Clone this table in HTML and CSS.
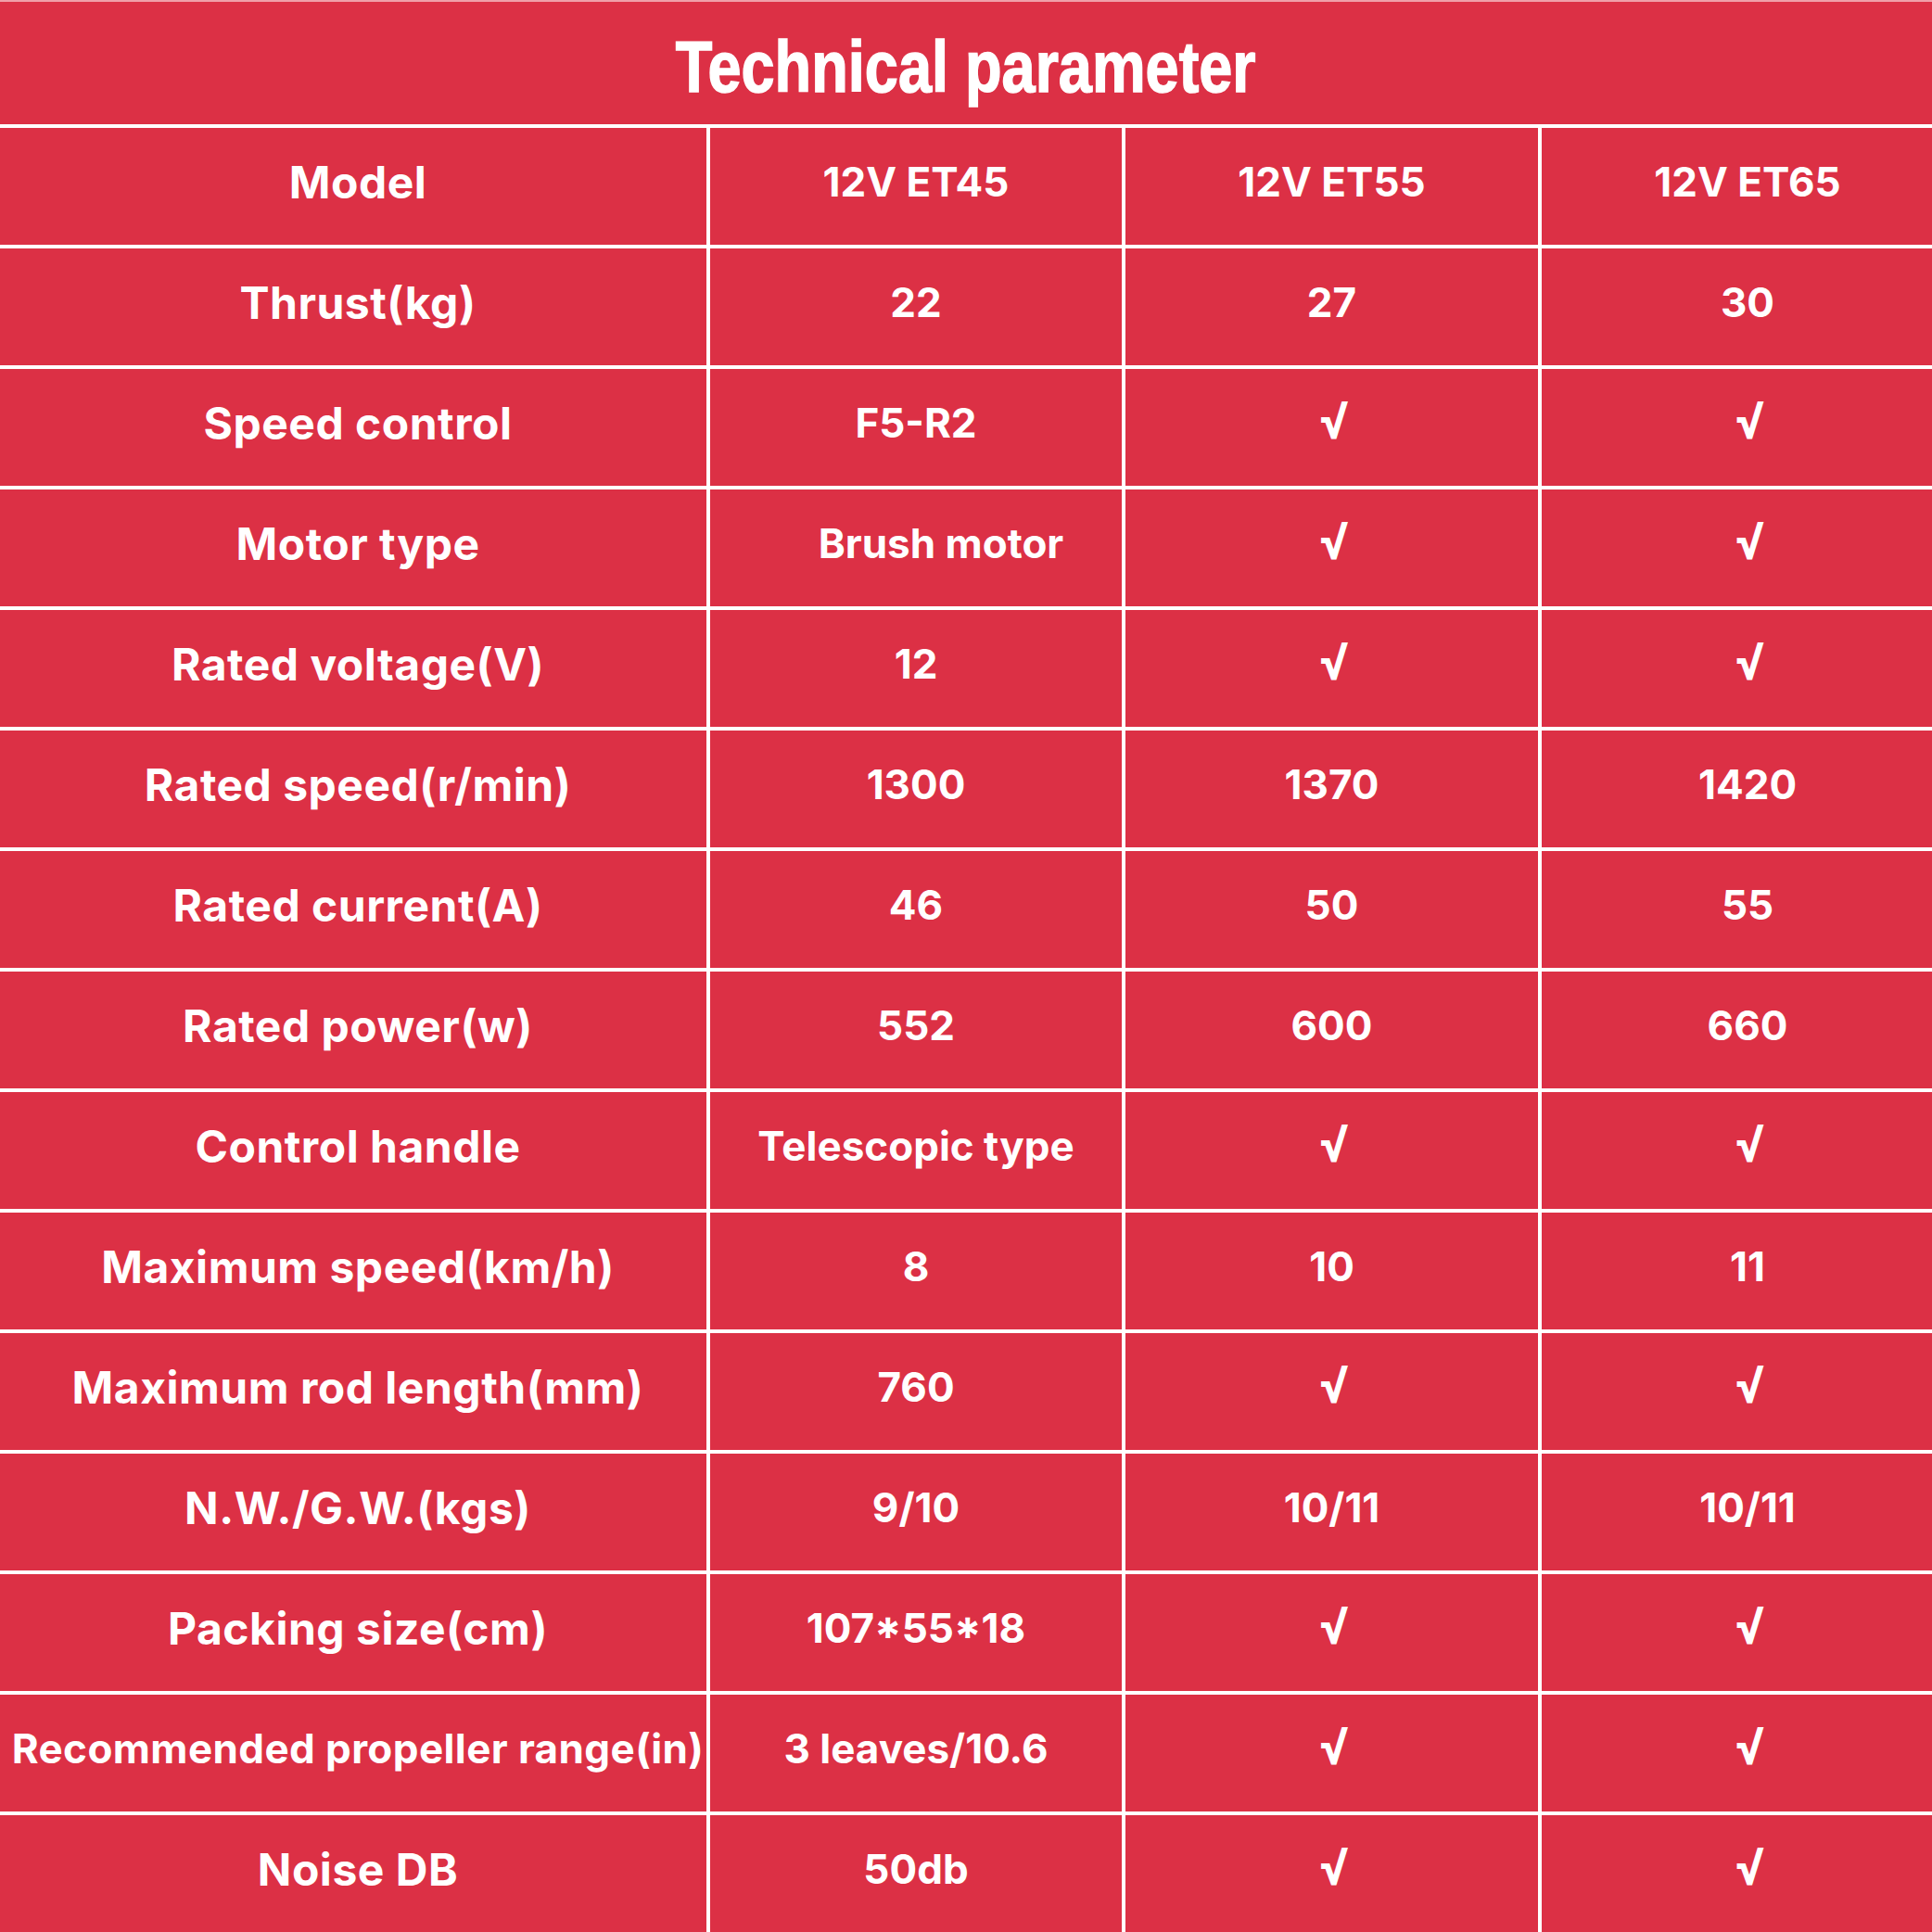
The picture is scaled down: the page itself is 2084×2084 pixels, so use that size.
FILE: index.html
```html
<!DOCTYPE html>
<html>
<head>
<meta charset="utf-8">
<link rel="stylesheet" href="styles.css">
</head>
<body>
<div class="sheet">
  <div class="title"><span class="title-text">Technical parameter</span></div>
  <div class="cell label">Model</div><div class="cell">12V ET45</div><div class="cell">12V ET55</div><div class="cell">12V ET65</div>
  <div class="cell label">Thrust(kg)</div><div class="cell">22</div><div class="cell">27</div><div class="cell">30</div>
  <div class="cell label">Speed control</div><div class="cell">F5-R2</div><div class="cell chk">√</div><div class="cell chk">√</div>
  <div class="cell label">Motor type</div><div class="cell shift">Brush motor</div><div class="cell chk">√</div><div class="cell chk">√</div>
  <div class="cell label">Rated voltage(V)</div><div class="cell">12</div><div class="cell chk">√</div><div class="cell chk">√</div>
  <div class="cell label">Rated speed(r/min)</div><div class="cell">1300</div><div class="cell">1370</div><div class="cell">1420</div>
  <div class="cell label">Rated current(A)</div><div class="cell">46</div><div class="cell">50</div><div class="cell">55</div>
  <div class="cell label">Rated power(w)</div><div class="cell">552</div><div class="cell">600</div><div class="cell">660</div>
  <div class="cell label">Control handle</div><div class="cell">Telescopic type</div><div class="cell chk">√</div><div class="cell chk">√</div>
  <div class="cell label">Maximum speed(km/h)</div><div class="cell">8</div><div class="cell">10</div><div class="cell">11</div>
  <div class="cell label">Maximum rod length(mm)</div><div class="cell">760</div><div class="cell chk">√</div><div class="cell chk">√</div>
  <div class="cell label">N.W./G.W.(kgs)</div><div class="cell">9/10</div><div class="cell">10/11</div><div class="cell">10/11</div>
  <div class="cell label">Packing size(cm)</div><div class="cell">107*55*18</div><div class="cell chk">√</div><div class="cell chk">√</div>
  <div class="cell label small">Recommended propeller range(in)</div><div class="cell">3 leaves/10.6</div><div class="cell chk">√</div><div class="cell chk">√</div>
  <div class="cell label">Noise DB</div><div class="cell">50db</div><div class="cell chk">√</div><div class="cell chk">√</div>
</div>
</body>
</html>
```
FILE: styles.css
```css
html, body {
  margin: 0;
  padding: 0;
  background: #dc3045;
  overflow: hidden;
}
.sheet {
  width: 2107px;
  height: 2084px;
  box-sizing: border-box;
  border-top: 2px solid #f0a0aa;
  background: #ffffff;
  display: grid;
  grid-template-columns: 762px 444px 445px 444px;
  grid-template-rows: 132px repeat(15, 126px);
  gap: 4px;
}
.title {
  grid-column: 1 / -1;
  background: #dc3045;
  color: #fff;
  display: flex;
  align-items: center;
  justify-content: center;
  padding-top: 8px;
  padding-right: 23px;
  box-sizing: border-box;
}
.title-text {
  font-family: "Liberation Sans", Arial, sans-serif;
  font-weight: 700;
  font-size: 77px;
  display: inline-block;
  transform: scaleX(0.842);
  -webkit-text-stroke: 1.5px #fff;
  white-space: nowrap;
}
.cell {
  background: #dc3045;
  color: #fff;
  display: flex;
  align-items: center;
  justify-content: center;
  font-family: Inter, "Liberation Sans", sans-serif;
  font-weight: 700;
  font-size: 44px;
  letter-spacing: 0;
  white-space: nowrap;
  padding-bottom: 10px;
  box-sizing: border-box;
}
.label {
  font-size: 48px;
  letter-spacing: 0.5px;
  padding-left: 10px;
}
.label.small {
  font-size: 44px;
  letter-spacing: 0.4px;
}
.shift {
  padding-left: 54px;
}
.chk {
  font-family: "Liberation Sans", sans-serif;
  font-weight: 700;
  font-size: 48px;
  font-style: italic;
  -webkit-text-stroke: 2px #fff;
  padding-bottom: 12px;
}
```
